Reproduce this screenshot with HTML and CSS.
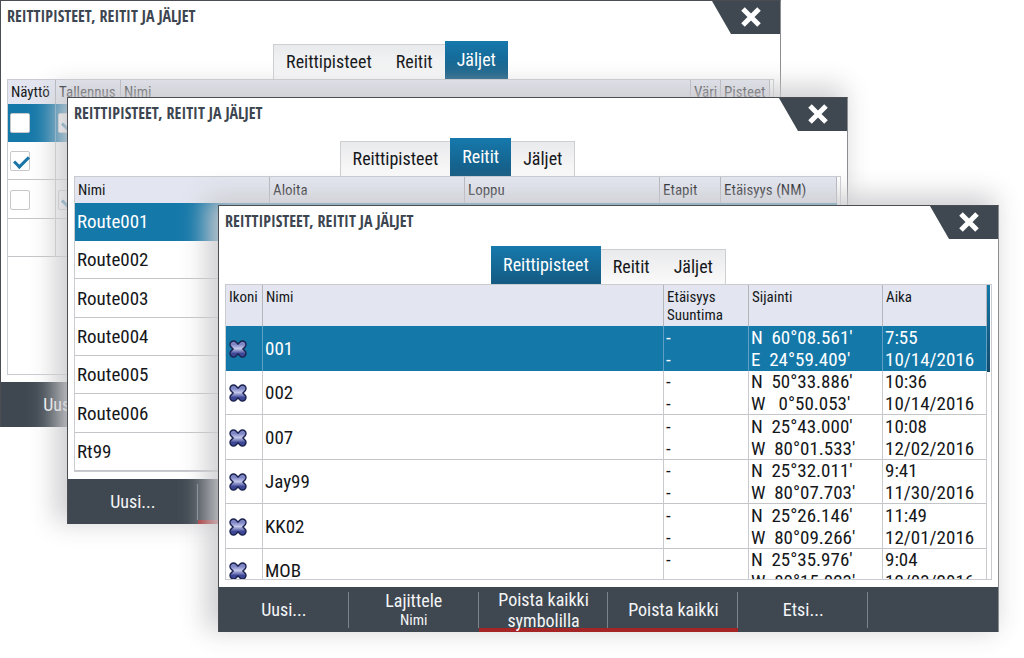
FILE: index.html
```html
<!DOCTYPE html>
<html lang="fi">
<head>
<meta charset="utf-8">
<title>Reittipisteet, reitit ja jäljet</title>
<link rel="stylesheet" href="styles.css">
</head>
<body>
<svg class="defs" aria-hidden="true">
  <defs>
    <linearGradient id="mark-fill" x1="0" y1="0" x2="0" y2="1">
      <stop offset="0" stop-color="#7f86c6"/>
      <stop offset="0.45" stop-color="#c3c8ea"/>
      <stop offset="1" stop-color="#3d4796"/>
    </linearGradient>
    <symbol id="mark" viewBox="0 0 20 20">
      <path d="M5.500 5.500 L14.500 14.500 M14.500 5.500 L5.500 14.500" stroke="#1c2350" stroke-width="8.400" stroke-linecap="round" fill="none"/>
      <path d="M5.500 5.500 L14.500 14.500 M14.500 5.500 L5.500 14.500" stroke="url(#mark-fill)" stroke-width="5.400" stroke-linecap="round" fill="none"/>
    </symbol>
    <symbol id="cross" viewBox="0 0 22 22">
      <path d="M3 3 L19 19 M19 3 L3 19" stroke="#fff" stroke-width="5" fill="none"/>
    </symbol>
  </defs>
</svg>
<main class="desktop">

  <section class="window window-tracks">
    <header class="titlebar">
      <h2 class="title">REITTIPISTEET, REITIT JA JÄLJET</h2>
      <button class="close" aria-label="Sulje"><svg class="cross"><use href="#cross"/></svg></button>
    </header>
    <nav class="tabs">
      <button class="tab">Reittipisteet</button><button class="tab">Reitit</button><button class="tab selected">Jäljet</button>
    </nav>
    <div class="panel">
      <table class="grid tracks">
        <colgroup><col class="c-show"><col class="c-rec"><col><col class="c-color"><col class="c-points"></colgroup>
        <thead><tr><th>Näyttö</th><th>Tallennus</th><th>Nimi</th><th>Väri</th><th>Pisteet</th></tr></thead>
        <tbody>
          <tr class="current"><td><input type="checkbox" aria-label="Näyttö"></td><td><input type="checkbox" aria-label="Tallennus" checked></td><td></td><td></td><td></td></tr>
          <tr><td><input type="checkbox" aria-label="Näyttö" checked></td><td></td><td></td><td></td><td></td></tr>
          <tr><td><input type="checkbox" aria-label="Näyttö"></td><td><input type="checkbox" aria-label="Tallennus" checked></td><td></td><td></td><td></td></tr>
          <tr><td></td><td></td><td></td><td></td><td></td></tr>
        </tbody>
      </table>
    </div>
    <footer class="actions">
      <button class="action">Uusi...</button><button class="action" disabled></button><button class="action" disabled></button><button class="action" disabled></button><button class="action" disabled></button><button class="action" disabled></button>
    </footer>
  </section>

  <section class="window window-routes">
    <header class="titlebar">
      <h2 class="title">REITTIPISTEET, REITIT JA JÄLJET</h2>
      <button class="close" aria-label="Sulje"><svg class="cross"><use href="#cross"/></svg></button>
    </header>
    <nav class="tabs">
      <button class="tab">Reittipisteet</button><button class="tab selected">Reitit</button><button class="tab">Jäljet</button>
    </nav>
    <div class="panel">
      <table class="grid routes">
        <colgroup><col><col class="c-end"><col class="c-end"><col class="c-legs"><col class="c-dist"></colgroup>
        <thead><tr><th>Nimi</th><th>Aloita</th><th>Loppu</th><th>Etapit</th><th>Etäisyys (NM)</th></tr></thead>
        <tbody>
          <tr class="current"><td>Route001</td><td></td><td></td><td></td><td></td></tr>
          <tr><td>Route002</td><td></td><td></td><td></td><td></td></tr>
          <tr><td>Route003</td><td></td><td></td><td></td><td></td></tr>
          <tr><td>Route004</td><td></td><td></td><td></td><td></td></tr>
          <tr><td>Route005</td><td></td><td></td><td></td><td></td></tr>
          <tr><td>Route006</td><td></td><td></td><td></td><td></td></tr>
          <tr><td>Rt99</td><td></td><td></td><td></td><td></td></tr>
        </tbody>
      </table>
    </div>
    <footer class="actions">
      <button class="action">Uusi...</button><button class="action danger" disabled></button><button class="action" disabled></button><button class="action" disabled></button><button class="action" disabled></button><button class="action" disabled></button>
    </footer>
  </section>

  <section class="window window-waypoints">
    <header class="titlebar">
      <h2 class="title">REITTIPISTEET, REITIT JA JÄLJET</h2>
      <button class="close" aria-label="Sulje"><svg class="cross"><use href="#cross"/></svg></button>
    </header>
    <nav class="tabs">
      <button class="tab selected">Reittipisteet</button><button class="tab">Reitit</button><button class="tab">Jäljet</button>
    </nav>
    <div class="panel">
      <table class="grid waypoints">
        <colgroup><col class="c-icon"><col><col class="c-range"><col class="c-pos"><col class="c-time"></colgroup>
        <thead><tr><th>Ikoni</th><th>Nimi</th><th>Etäisyys<br>Suuntima</th><th>Sijainti</th><th>Aika</th></tr></thead>
        <tbody>
          <tr class="current"><td><svg class="mark"><use href="#mark"/></svg></td><td>001</td><td>-<br>-</td><td>N  60°08.561'<br>E  24°59.409'</td><td>7:55<br>10/14/2016</td></tr>
          <tr><td><svg class="mark"><use href="#mark"/></svg></td><td>002</td><td>-<br>-</td><td>N  50°33.886'<br>W   0°50.053'</td><td>10:36<br>10/14/2016</td></tr>
          <tr><td><svg class="mark"><use href="#mark"/></svg></td><td>007</td><td>-<br>-</td><td>N  25°43.000'<br>W  80°01.533'</td><td>10:08<br>12/02/2016</td></tr>
          <tr><td><svg class="mark"><use href="#mark"/></svg></td><td>Jay99</td><td>-<br>-</td><td>N  25°32.011'<br>W  80°07.703'</td><td>9:41<br>11/30/2016</td></tr>
          <tr><td><svg class="mark"><use href="#mark"/></svg></td><td>KK02</td><td>-<br>-</td><td>N  25°26.146'<br>W  80°09.266'</td><td>11:49<br>12/01/2016</td></tr>
          <tr><td><svg class="mark"><use href="#mark"/></svg></td><td>MOB</td><td>-<br>-</td><td>N  25°35.976'<br>W  80°15.023'</td><td>9:04<br>12/03/2016</td></tr>
        </tbody>
      </table>
      <div class="scrollbar"><div class="thumb"></div></div>
    </div>
    <footer class="actions">
      <button class="action">Uusi...</button><button class="action">Lajittele<small class="sub">Nimi</small></button><button class="action danger">Poista kaikki symbolilla</button><button class="action danger">Poista kaikki</button><button class="action">Etsi...</button><button class="action" disabled></button>
    </footer>
  </section>

</main>
</body>
</html>
```
FILE: styles.css
```css
* { box-sizing: border-box; }

body {
  margin: 0;
  background: #fff;
  color: #15171a;
  font-family: "Roboto Condensed", "Noto Sans", sans-serif;
  font-size: 19px;
}

button { margin: 0; border: 0; font: inherit; color: inherit; }

.defs { position: absolute; width: 0; height: 0; }

.desktop { position: relative; min-height: 100vh; overflow: hidden; }

.window {
  position: absolute;
  display: flex;
  flex-direction: column;
  width: calc(100vw - 243px);
  min-width: 640px;
  background: #fff;
  border: 1px solid #4a4d52;
  border-right-color: #8b8d91;
  border-bottom: 0;
}
.window-tracks { left: 0; top: 0; }
.window-routes { left: 67px; top: 97px; }
.window-waypoints { left: 218px; top: 205px; }
.window-routes, .window-waypoints {
  box-shadow: -8px -6px 24px 4px rgba(204, 203, 207, 0.95);
}

.titlebar { display: flex; justify-content: space-between; height: 33px; padding-left: 6px; }
.title {
  margin: 0;
  color: #3d4550;
  font-family: "Open Sans Condensed", "Open Sans", sans-serif;
  font-size: 16px;
  font-weight: 700;
  line-height: 31px;
}
.close {
  display: grid;
  place-items: center;
  width: 68px;
  padding: 0 0 2px 9px;
  background: #3f4851;
  clip-path: polygon(0 0, 100% 0, 100% 100%, 19px 100%);
}
.cross { width: 22px; height: 22px; }

.tabs { display: flex; justify-content: center; align-items: flex-end; height: 45px; }
.tab {
  height: 35px;
  padding: 0 12px 2px;
  background: linear-gradient(#e9eaec, #fafafa);
  border-top: 1px solid #cdcfd2;
  font-size: 18px;
}
.tab:first-child { border-left: 1px solid #cdcfd2; }
.tab:last-child { border-right: 1px solid #cdcfd2; }
.tab.selected {
  height: 38px;
  background: linear-gradient(#1679ac, #145a82);
  border: 0;
  color: #fff;
}

.panel {
  display: flex;
  height: 296px;
  margin: 0 6px 7px;
  overflow: hidden;
  border: 1px solid #c9cbd0;
}

.grid {
  flex: 1;
  align-self: flex-start;
  table-layout: fixed;
  width: 100%;
  border-collapse: separate;
  border-spacing: 0;
}
.grid th {
  height: 24px;
  padding: 0 3px;
  background: #e3e6f0;
  border-right: 1px solid #b4b6bc;
  font-size: 15px;
  font-weight: 400;
  line-height: 18px;
  text-align: left;
  white-space: nowrap;
}
.grid td {
  height: 38px;
  padding: 0 2px;
  border-right: 1px solid #c9cacd;
  box-shadow: inset 0 -1px #c4c5c8;
  line-height: 22px;
  white-space: pre;
}
.grid .current td { background: #1478a9; border-right-color: #5f9fc4; box-shadow: none; color: #fff; }

.tracks, .routes { margin-right: 3px; }
.tracks tr:nth-child(3n) td, .routes tr:nth-child(3n) td { height: 39px; }
.tracks .c-show { width: 48px; }
.tracks .c-rec { width: 65px; }
.tracks .c-color { width: 30px; }
.tracks .c-points { width: 49px; }
.routes th { height: 26px; }
.routes td { border-right: 0; }
.routes .c-end { width: 195px; }
.routes .c-legs { width: 61px; }
.routes .c-dist { width: 116px; }

.waypoints th { height: 41px; vertical-align: top; padding-top: 3px; }
.waypoints tbody tr:nth-child(odd) td { height: 45px; }
.waypoints tbody tr:nth-child(even) td { height: 44px; }
.waypoints .c-icon { width: 37px; }
.waypoints .c-range { width: 85px; }
.waypoints .c-pos { width: 134px; }
.waypoints .c-time { width: 104px; }
.mark { display: block; width: 20px; height: 20px; }

.scrollbar { width: 4px; }
.thumb { width: 3px; height: 87px; background: linear-gradient(#1478a9, #134a6b); }

input[type="checkbox"] {
  appearance: none;
  display: block;
  width: 20px;
  height: 20px;
  margin: 0;
  background: #fff;
  border: 1px solid #c6c8cc;
  border-radius: 2px;
}
input[type="checkbox"]:checked::before {
  content: "";
  display: block;
  width: 12px;
  height: 6px;
  margin: 4px 3px;
  border: solid #1b76a8;
  border-width: 0 0 3px 3px;
  transform: rotate(-45deg);
}

.actions { display: flex; height: 45px; background: #3f4851; color: #f4f5f6; font-size: 18px; }
.action {
  display: flex;
  flex: 1;
  flex-direction: column;
  align-items: center;
  justify-content: center;
  padding: 0 16px;
  background: linear-gradient(#7b838b, #7b838b) right center / 1px 36px no-repeat;
  line-height: 21px;
}
.action:last-child { background: none; }
.action.danger { box-shadow: inset 0 -4px #a52426; }
.sub { font-size: 15px; line-height: 18px; }
```
